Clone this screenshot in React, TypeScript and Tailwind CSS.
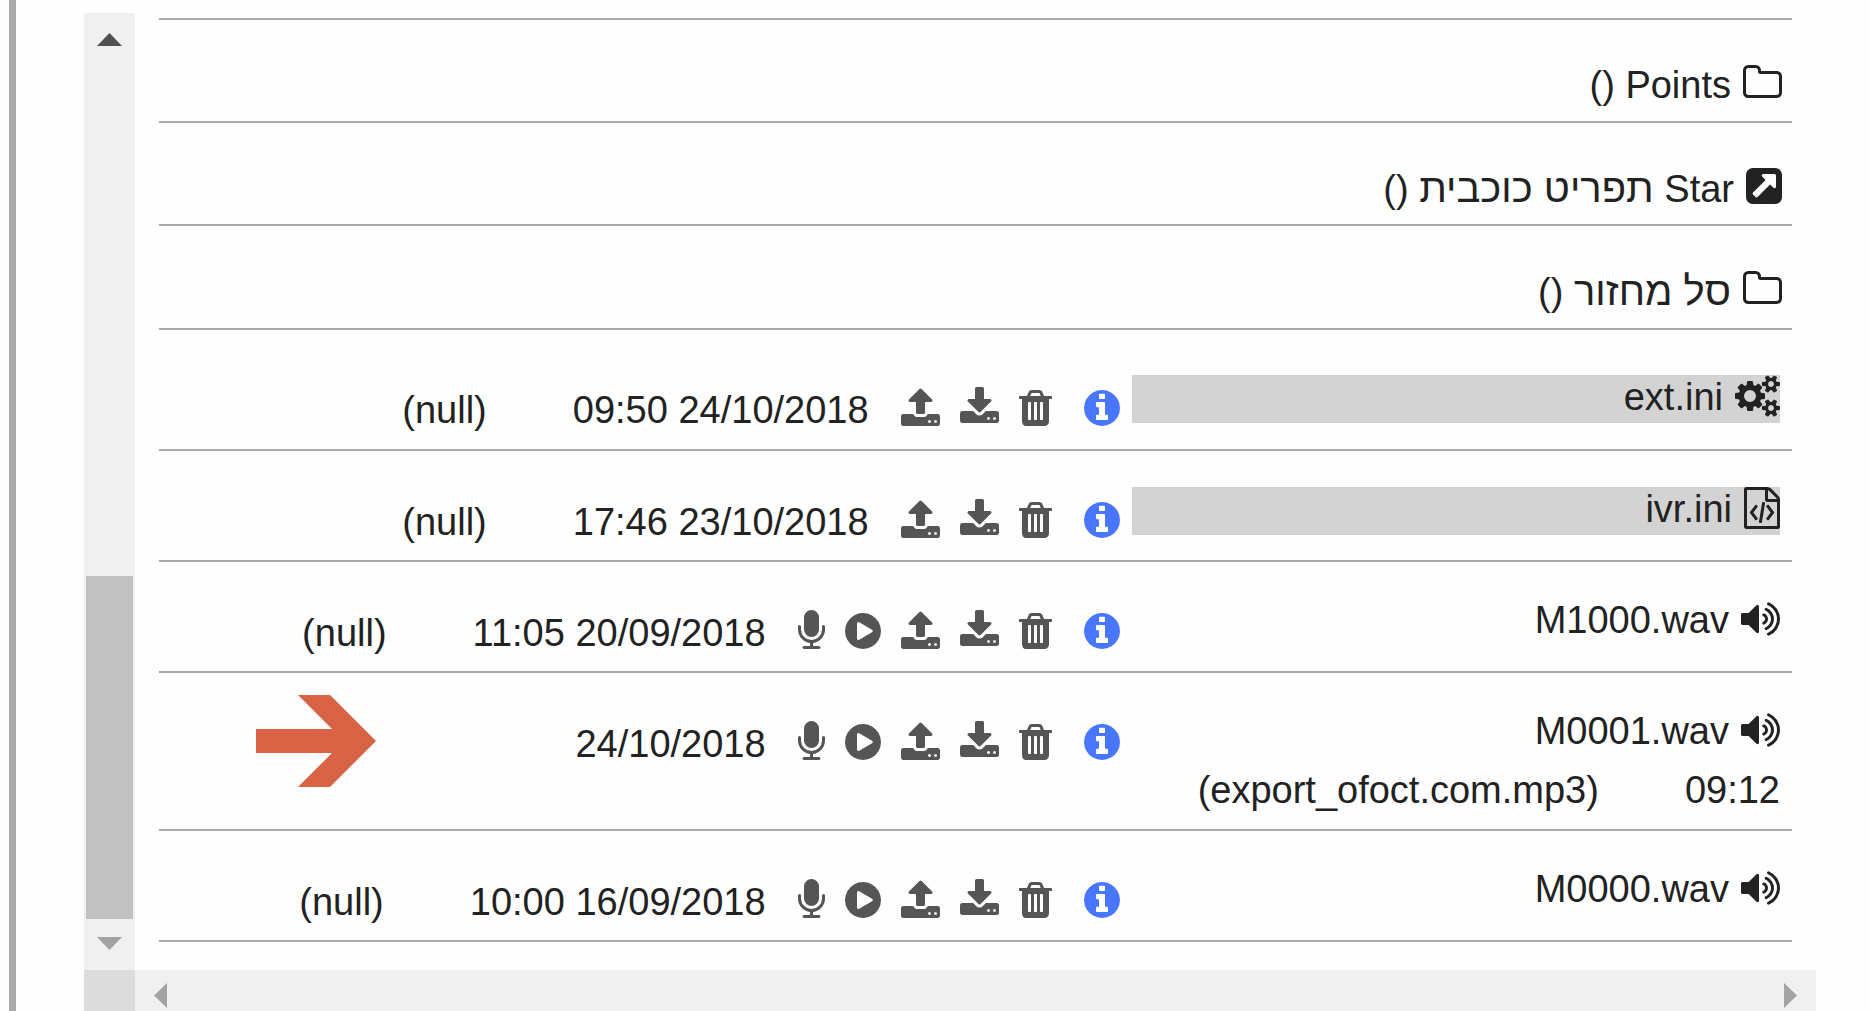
import { clsx } from "clsx";

interface IconProps {
  name: keyof typeof icons;
  className?: string;
}

interface FolderItem {
  name?: string;
  hebrewName?: string;
  icon: keyof typeof icons;
}

interface FileItem {
  name: string;
  icon: keyof typeof icons;
  date: string;
  time: string;
  source: string;
  editable?: boolean;
  wrapped?: boolean;
}

// Glyph outlines on a 1792 unit grid, drawn at 42px
const icons = {
  folder: {
    box: "64 0 1664 1792",
    width: 39,
    d: "M1600 1312v-704q0-40-28-68t-68-28h-704q-40 0-68-28t-28-68v-64q0-40-28-68t-68-28h-320q-40 0-68 28t-28 68v960q0 40 28 68t68 28h1216q40 0 68-28t28-68zm128-704v704q0 92-66 158t-158 66h-1216q-92 0-158-66t-66-158v-960q0-92 66-158t158-66h320q92 0 158 66t66 158v32h672q92 0 158 66t66 158z",
  },
  link: {
    box: "128 0 1536 1792",
    width: 36,
    d: "M1408 928v-480q0-26-19-45t-45-19h-480q-42 0-59 39-17 41 14 70l144 144-534 534q-19 19-19 45t19 45l102 102q19 19 45 19t45-19l534-534 144 144q18 19 45 19 12 0 25-5 39-17 39-59zm256-512v960q0 119-84.5 203.5t-203.5 84.5h-960q-119 0-203.5-84.5t-84.5-203.5v-960q0-119 84.5-203.5t203.5-84.5h960q119 0 203.5 84.5t84.5 203.5z",
  },
  cogs: {
    box: "-64 0 1920 1792",
    width: 45,
    d: "M832 896q0-106-75-181t-181-75-181 75-75 181 75 181 181 75 181-75 75-181zm768 512q0-52-38-90t-90-38-90 38-38 90q0 53 37.5 90.5t90.5 37.5 90.5-37.5 37.5-90.5zm0-1024q0-52-38-90t-90-38-90 38-38 90q0 53 37.5 90.5t90.5 37.5 90.5-37.5 37.5-90.5zm-384 421v185q0 10-7 19.5t-16 10.5l-155 24q-11 35-32 76 34 48 90 115 7 11 7 20 0 12-7 19-23 30-82.5 89.5t-78.5 59.5q-11 0-21-7l-115-90q-37 19-77 31-11 108-23 155-7 24-30 24h-186q-11 0-20-7.5t-10-17.5l-23-153q-34-10-75-31l-118 89q-7 7-20 7-11 0-21-8-144-133-144-160 0-9 7-19 10-14 41-53t47-61q-23-44-35-82l-152-24q-10-1-17-9.5t-7-19.5v-185q0-10 7-19.5t16-10.5l155-24q11-35 32-76-34-48-90-115-7-11-7-20 0-12 7-20 22-30 82-89t79-59q11 0 21 7l115 90q34-18 77-32 11-108 23-154 7-24 30-24h186q11 0 20 7.5t10 17.5l23 153q34 10 75 31l118-89q8-7 20-7 11 0 21 8 144 133 144 160 0 8-7 19-12 16-42 54t-45 60q23 48 34 82l152 23q10 2 17 10.5t7 19.5zm640 533v140q0 16-149 31-12 27-30 52 51 113 51 138 0 4-4 7-122 71-124 71-8 0-46-47t-52-68q-20 2-30 2t-30-2q-14 21-52 68t-46 47q-2 0-124-71-4-3-4-7 0-25 51-138-18-25-30-52-149-15-149-31v-140q0-16 149-31 13-29 30-52-51-113-51-138 0-4 4-7 4-2 35-20t59-34 30-16q8 0 46 46.5t52 67.5q20-2 30-2t30 2q51-71 92-112l6-2q4 0 124 70 4 3 4 7 0 25-51 138 17 23 30 52 149 15 149 31zm0-1024v140q0 16-149 31-12 27-30 52 51 113 51 138 0 4-4 7-122 71-124 71-8 0-46-47t-52-68q-20 2-30 2t-30-2q-14 21-52 68t-46 47q-2 0-124-71-4-3-4-7 0-25 51-138-18-25-30-52-149-15-149-31v-140q0-16 149-31 13-29 30-52-51-113-51-138 0-4 4-7 4-2 35-20t59-34 30-16q8 0 46 46.5t52 67.5q20-2 30-2t30 2q51-71 92-112l6-2q4 0 124 70 4 3 4 7 0 25-51 138 17 23 30 52 149 15 149 31z",
  },
  code: {
    box: "128 0 1536 1792",
    width: 36,
    d: "M1596 380q28 28 48 76t20 88v1152q0 40-28 68t-68 28h-1344q-40 0-68-28t-28-68v-1600q0-40 28-68t68-28h896q40 0 88 20t76 48zm-444-244v376h376q-10-29-22-41l-313-313q-12-12-41-22zm384 1528v-1024h-416q-40 0-68-28t-28-68v-416h-768v1536h1280zm-928-896q8-11 21-12.5t24 6.5l51 38q11 8 12.5 21t-6.5 24l-182 243 182 243q8 11 6.5 24t-12.5 21l-51 38q-11 8-24 6.5t-21-12.5l-226-301q-14-19 0-38zm802 301q14 19 0 38l-226 301q-8 11-21 12.5t-24-6.5l-51-38q-11-8-12.5-21t6.5-24l182-243-182-243q-8-11-6.5-24t12.5-21l51-38q11-8 24-6.5t21 12.5zm-620 461q-13-2-20.5-13t-5.5-24l138-831q2-13 13-20.5t24-5.5l63 10q13 2 20.5 13t5.5 24l-138 831q-2 13-13 20.5t-24 5.5z",
  },
  volume: {
    box: "64 0 1664 1792",
    width: 39,
    d: "M832 352v1088q0 26-19 45t-45 19-45-19l-333-333h-262q-26 0-45-19t-19-45v-384q0-26 19-45t45-19h262l333-333q19-19 45-19t45 19 19 45zm384 544q0 76-42.5 141.5t-112.5 93.5q-10 5-25 5-26 0-45-18.5t-19-45.5q0-21 12-35.5t29-25 34-23 29-35.5 12-57-12-57-29-35.5-34-23-29-25-12-35.5q0-27 19-45.5t45-18.5q15 0 25 5 70 27 112.5 93t42.5 142zm256 0q0 153-85 282.5t-225 188.5q-13 5-25 5-27 0-46-19t-19-45q0-39 39-59 56-29 76-44 74-54 115.5-135.5t41.5-173.5-41.5-173.5-115.5-135.5q-20-15-76-44-39-20-39-59 0-26 19-45t45-19q13 0 26 5 140 59 225 188.5t85 282.5zm256 0q0 230-127 422.5t-338 283.5q-13 5-26 5-26 0-45-19t-19-45q0-36 39-59 7-4 22.5-10.5t22.5-10.5q46-25 82-51 123-91 192-227t69-289-69-289-192-227q-36-26-82-51-7-4-22.5-10.5t-22.5-10.5q-39-23-39-59 0-26 19-45t45-19q13 0 26 5 211 91 338 283.5t127 422.5z",
  },
  info: {
    box: "128 0 1536 1792",
    width: 36,
    d: "M1152 1376v-160q0-14-9-23t-23-9h-96v-512q0-14-9-23t-23-9h-320q-14 0-23 9t-9 23v160q0 14 9 23t23 9h96v320h-96q-14 0-23 9t-9 23v160q0 14 9 23t23 9h448q14 0 23-9t9-23zm-128-896v-160q0-14-9-23t-23-9h-192q-14 0-23 9t-9 23v160q0 14 9 23t23 9h192q14 0 23-9t9-23zm640 416q0 209-103 385.5t-279.5 279.5-385.5 103-385.5-103-279.5-279.5-103-385.5 103-385.5 279.5-279.5 385.5-103 385.5 103 279.5 279.5 103 385.5z",
  },
  trash: {
    box: "192 0 1408 1792",
    width: 33,
    d: "M704 1376v-704q0-14-9-23t-23-9h-64q-14 0-23 9t-9 23v704q0 14 9 23t23 9h64q14 0 23-9t9-23zm256 0v-704q0-14-9-23t-23-9h-64q-14 0-23 9t-9 23v704q0 14 9 23t23 9h64q14 0 23-9t9-23zm256 0v-704q0-14-9-23t-23-9h-64q-14 0-23 9t-9 23v704q0 14 9 23t23 9h64q14 0 23-9t9-23zm-544-992h448l-48-117q-7-9-17-11h-317q-10 2-17 11zm928 32v64q0 14-9 23t-23 9h-96v948q0 83-47 143.5t-113 60.5h-832q-66 0-113-58.5t-47-141.5v-952h-96q-14 0-23-9t-9-23v-64q0-14 9-23t23-9h309l70-167q15-37 54-63t79-26h320q40 0 79 26t54 63l70 167h309q14 0 23 9t9 23z",
  },
  download: {
    box: "64 0 1664 1792",
    width: 39,
    d: "M1344 1344q0-26-19-45t-45-19-45 19-19 45 19 45 45 19 45-19 19-45zm256 0q0-26-19-45t-45-19-45 19-19 45 19 45 45 19 45-19 19-45zm128-224v320q0 40-28 68t-68 28h-1472q-40 0-68-28t-28-68v-320q0-40 28-68t68-28h465l135 136q58 56 136 56t136-56l136-136h464q40 0 68 28t28 68zm-325-569q17 41-14 70l-448 448q-18 19-45 19t-45-19l-448-448q-31-29-14-70 17-39 59-39h256v-448q0-26 19-45t45-19h256q26 0 45 19t19 45v448h256q42 0 59 39z",
  },
  upload: {
    box: "64 0 1664 1792",
    width: 39,
    d: "M1344 1472q0-26-19-45t-45-19-45 19-19 45 19 45 45 19 45-19 19-45zm256 0q0-26-19-45t-45-19-45 19-19 45 19 45 45 19 45-19 19-45zm128-224v320q0 40-28 68t-68 28h-1472q-40 0-68-28t-28-68v-320q0-40 28-68t68-28h427q21 56 70.5 92t110.5 36h256q61 0 110.5-36t70.5-92h427q40 0 68 28t28 68zm-325-648q-17 40-59 40h-256v448q0 26-19 45t-45 19h-256q-26 0-45-19t-19-45v-448h-256q-42 0-59-40-17-39 14-69l448-448q18-19 45-19t45 19l448 448q31 30 14 69z",
  },
  play: {
    box: "128 0 1536 1792",
    width: 36,
    d: "M896 128q209 0 385.5 103t279.5 279.5 103 385.5-103 385.5-279.5 279.5-385.5 103-385.5-103-279.5-279.5-103-385.5 103-385.5 279.5-279.5 385.5-103zm384 823q32-18 32-55t-32-55l-544-320q-31-19-64-1-32 19-32 56v640q0 37 32 56 16 8 32 8 17 0 32-9z",
  },
  microphone: {
    box: "320 0 1152 1792",
    width: 27,
    d: "M1472 704v128q0 221-147.5 384.5t-364.5 187.5v132h256q26 0 45 19t19 45-19 45-45 19h-640q-26 0-45-19t-19-45 19-45 45-19h256v-132q-217-24-364.5-187.5t-147.5-384.5v-128q0-26 19-45t45-19 45 19 19 45v128q0 185 131.5 316.5t316.5 131.5 316.5-131.5 131.5-316.5v-128q0-26 19-45t45-19 45 19 19 45zm-256-384v512q0 132-94 226t-226 94-226-94-94-226v-512q0-132 94-226t226-94 226 94 94 226z",
  },
};

const folders: FolderItem[] = [
  { name: "Points", icon: "folder" },
  { name: "Star", hebrewName: "תפריט כוכבית", icon: "link" },
  { hebrewName: "סל מחזור", icon: "folder" },
];

const files: FileItem[] = [
  { name: "ext.ini", icon: "cogs", date: "24/10/2018", time: "09:50", source: "(null)", editable: true },
  { name: "ivr.ini", icon: "code", date: "23/10/2018", time: "17:46", source: "(null)", editable: true },
  { name: "M1000.wav", icon: "volume", date: "20/09/2018", time: "11:05", source: "(null)" },
  {
    name: "M0001.wav",
    icon: "volume",
    date: "24/10/2018",
    time: "09:12",
    source: "(export_ofoct.com.mp3)",
    wrapped: true,
  },
  { name: "M0000.wav", icon: "volume", date: "16/09/2018", time: "10:00", source: "(null)" },
];

const Icon = ({ name, className }: IconProps) => {
  const icon = icons[name];
  return (
    <svg
      viewBox={icon.box}
      width={icon.width}
      height={42}
      fill="currentColor"
      className={clsx("block shrink-0", className)}
      aria-hidden="true"
    >
      <path d={icon.d} />
    </svg>
  );
};

const ToolButton = ({ name, label, className }: IconProps & { label: string }) => (
  <button type="button" aria-label={label} className={clsx("shrink-0 cursor-pointer text-[#555]", className)}>
    <Icon name={name} />
  </button>
);

const FolderRow = ({ name, hebrewName, icon }: FolderItem) => (
  <li className="flex border-b-2 border-[#a9a9a9] pt-[42px] pr-[10px] pb-[13px] leading-[46px] last:pb-[14px]">
    <a href="#" className="flex gap-3">
      <Icon name={icon} />
      <span className="h-[46px]">
        {name} {hebrewName && <span className="text-[40px]">{hebrewName}</span>} ()
      </span>
    </a>
  </li>
);

const FileRow = ({ name, icon, date, time, source, editable, wrapped }: FileItem) => (
  <li className="relative flex items-start border-b-2 border-[#a9a9a9] pr-3 first:pt-[9px] first:pb-px">
    <div className="w-2/5 shrink-0 pt-9 leading-[44px]">
      <a href="#" className={clsx("flex h-12 gap-3 overflow-hidden", editable && "bg-[#d3d3d3]")}>
        <Icon name={icon} />
        <span>{name}</span>
      </a>
      {wrapped && (
        <div className="mt-[11px] flex gap-[86px] pb-[17px]">
          <span>{time}</span>
          <span dir="ltr">{source}</span>
        </div>
      )}
    </div>
    <div className="flex items-start gap-5 pt-12 pr-3 pb-[15px] leading-[46px] whitespace-nowrap">
      <ToolButton name="info" label="מידע" className="text-[#4876ff]!" />
      <ToolButton name="trash" label="מחיקה" className="mr-3" />
      <ToolButton name="download" label="הורדה" />
      <ToolButton name="upload" label="העלאה" />
      {!editable && (
        <>
          <ToolButton name="play" label="השמעה" />
          <ToolButton name="microphone" label="הקלטה" />
        </>
      )}
      <div className="mr-3 flex gap-[86px]">
        <span>
          {date} {!wrapped && time}
        </span>
        {!wrapped && <span dir="ltr">{source}</span>}
      </div>
    </div>
    {wrapped && (
      <svg viewBox="0 0 120 92" className="absolute top-[22px] left-[97px] w-[120px] fill-[#d96345]" aria-hidden="true">
        <path d="M0 34H76L42 0H74L120 46L74 92H42L76 58H0Z" />
      </svg>
    )}
  </li>
);

const VerticalScrollbar = () => (
  <div className="flex w-[51px] shrink-0 flex-col bg-[#f0f0f0]">
    <div className="flex min-h-0 flex-1 flex-col">
      <button type="button" aria-label="למעלה" className="flex h-[51px] shrink-0 items-center justify-center pt-[2px]">
        <svg viewBox="0 0 25 13" className="w-[25px] fill-[#505050]">
          <path d="M0 13L12.5 0L25 13Z" />
        </svg>
      </button>
      <div className="flex-1" />
      <div className="mx-[2px] h-[343px] bg-[#c1c1c1]" />
      <button type="button" aria-label="למטה" className="flex h-[51px] shrink-0 items-center justify-center pb-[2px]">
        <svg viewBox="0 0 25 13" className="w-[25px] fill-[#a3a3a3]">
          <path d="M0 0L12.5 13L25 0Z" />
        </svg>
      </button>
    </div>
    <div className="h-[41px] shrink-0 bg-[#dcdcdc]" />
  </div>
);

// The bar is taller than what is left of the window, so its lower edge is cut off
const HorizontalScrollbar = () => (
  <div className="h-[41px] shrink-0 overflow-hidden bg-[#f0f0f0]">
    <div className="flex h-[51px] items-center justify-between px-[19px]">
      <button type="button" aria-label="שמאלה">
        <svg viewBox="0 0 13 25" className="w-[13px] fill-[#a3a3a3]">
          <path d="M13 0L0 12.5L13 25Z" />
        </svg>
      </button>
      <button type="button" aria-label="ימינה">
        <svg viewBox="0 0 13 25" className="w-[13px] fill-[#a3a3a3]">
          <path d="M0 0L13 12.5L0 25Z" />
        </svg>
      </button>
    </div>
  </div>
);

export default function App() {
  return (
    <div className="flex h-screen overflow-hidden bg-[#fefefe] pl-[9px] font-['Liberation_Sans',Arial,sans-serif] text-[38px] text-[#222]">
      <div className="flex min-w-0 flex-1 border-l-[7px] border-[#a9a9a9] pt-[13px] pr-[54px] pl-[68px]">
        <VerticalScrollbar />
        <main className="flex min-w-0 flex-1 flex-col">
          <div dir="rtl" className="min-h-0 flex-1 overflow-hidden px-6 pt-[5px]">
            <ul className="border-t-2 border-[#a9a9a9]">
              {folders.map((folder) => (
                <FolderRow key={folder.icon + folder.name} {...folder} />
              ))}
            </ul>
            <ul>
              {files.map((file) => (
                <FileRow key={file.name} {...file} />
              ))}
            </ul>
          </div>
          <HorizontalScrollbar />
        </main>
      </div>
    </div>
  );
}
